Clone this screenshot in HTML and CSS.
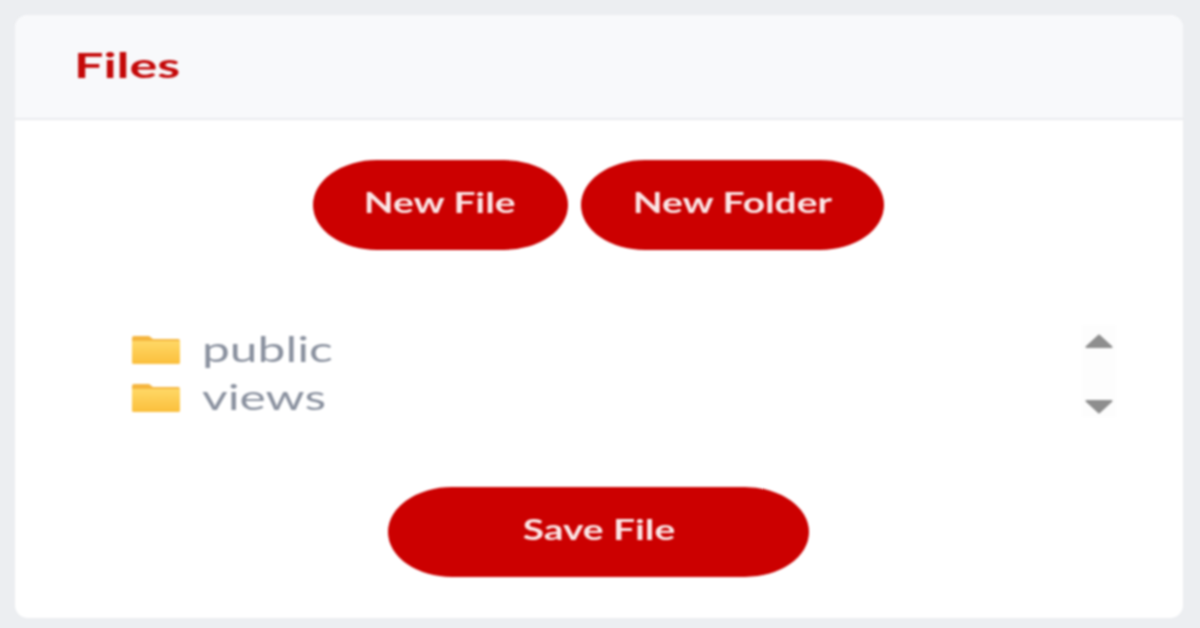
FILE: index.html
```html
<!DOCTYPE html>
<html lang="en">

<head>
    <meta charset="UTF-8">
    <meta name="viewport" content="width=device-width, initial-scale=1.0">
    <title>Files</title>
    <link rel="stylesheet" href="styles.css">
</head>

<body>
    <svg class="defs" width="0" height="0">
        <defs>
            <linearGradient id="folder-back" x1="0" y1="0" x2="0" y2="1">
                <stop offset="0" stop-color="#f5b53e" />
                <stop offset="1" stop-color="#f6bb40" />
            </linearGradient>
            <linearGradient id="folder-front" x1="0" y1="0" x2="0" y2="1">
                <stop offset="0" stop-color="#ffd866" />
                <stop offset="1" stop-color="#fbbf3c" />
            </linearGradient>
        </defs>
    </svg>

    <section class="card">
        <header class="card-header">
            <h1>Files</h1>
        </header>

        <div class="card-body">
            <div class="actions">
                <button class="btn btn-file"><span>New File</span></button>
                <button class="btn btn-folder"><span>New Folder</span></button>
            </div>

            <!-- File tree with its scrollbar -->
            <div class="tree">
                <ul class="tree-list">
                    <li>
                        <svg class="folder" viewBox="0 0 48 28">
                            <path d="M0 2 Q0 0 2 0 H17 L21 3 H46 Q48 3 48 5 V26 Q48 28 46 28 H2 Q0 28 0 26 Z" fill="url(#folder-back)" />
                            <path d="M0 5 H48 V26 Q48 28 46 28 H2 Q0 28 0 26 Z" fill="url(#folder-front)" />
                        </svg>
                        <span class="name">public</span>
                    </li>
                    <li>
                        <svg class="folder" viewBox="0 0 48 28">
                            <path d="M0 2 Q0 0 2 0 H17 L21 3 H46 Q48 3 48 5 V26 Q48 28 46 28 H2 Q0 28 0 26 Z" fill="url(#folder-back)" />
                            <path d="M0 5 H48 V26 Q48 28 46 28 H2 Q0 28 0 26 Z" fill="url(#folder-front)" />
                        </svg>
                        <span class="name">views</span>
                    </li>
                </ul>
                <div class="scrollbar">
                    <svg class="arrow" viewBox="0 0 28 14"><path d="M14 1.5 L26.5 13 H1.5 Z" fill="#8e8e8e" stroke="#8e8e8e" stroke-width="2" stroke-linejoin="round" /></svg>
                    <svg class="arrow" viewBox="0 0 28 14"><path d="M1.5 1 H26.5 L14 12.5 Z" fill="#8e8e8e" stroke="#8e8e8e" stroke-width="2" stroke-linejoin="round" /></svg>
                </div>
            </div>

            <div class="save-row">
                <button class="btn btn-save"><span>Save File</span></button>
            </div>
        </div>
    </section>
</body>

</html>
```

FILE: styles.css
```css
* {
    box-sizing: border-box;
}

body {
    margin: 0;
    height: 628px;
    padding: 15px 17px 10px 15px;
    background-color: #eceef1;
    font-family: Lato, "Open Sans", sans-serif;
    overflow: hidden;
}

.defs {
    display: block;
}

/* The reference is an upscaled, slightly soft picture */
.card {
    height: 603px;
    background-color: #fff;
    border-radius: 13px;
    overflow: hidden;
    filter: blur(0.8px);
}

.card-header {
    height: 105px;
    padding: 0 59px 4px;
    display: flex;
    align-items: center;
    background-color: #f8f9fb;
    border-bottom: 2px solid #e9ebee;
}

.card-header h1 {
    margin: 0;
    font-size: 34px;
    font-weight: 700;
    color: #c40808;
    transform: scaleX(1.53);
    transform-origin: left center;
}

.card-body {
    padding-top: 40px;
}

.actions {
    display: flex;
    justify-content: center;
    gap: 13px;
    margin-left: -2px;
}

.btn {
    height: 90px;
    padding: 0 0 7px;
    border: none;
    border-radius: 64px / 45px;
    background-color: #cc0000;
    color: #fbe6e6;
    font-family: inherit;
    font-size: 29px;
    font-weight: 700;
    cursor: pointer;
}

.btn span {
    display: inline-block;
    transform: scaleX(1.34);
}

.btn-file {
    width: 255px;
}

.btn-folder {
    width: 303px;
}

.tree {
    display: flex;
    justify-content: space-between;
    height: 100px;
    margin: 75px 67px 0 117px;
}

.tree-list {
    list-style-type: none;
    margin: 0;
    padding: 1px 0 0;
}

.tree-list li {
    display: flex;
    align-items: center;
    gap: 22px;
    height: 48px;
    font-size: 35px;
    color: #8a919f;
}

.name {
    transform: scaleX(1.42);
    transform-origin: left center;
    margin-top: -5px;
}

.folder {
    width: 48px;
    height: 28px;
}

.scrollbar {
    display: flex;
    flex-direction: column;
    justify-content: space-between;
    align-items: center;
    width: 34px;
    height: 92px;
    padding: 9px 0 3px;
    background-color: #fdfdfd;
}

.arrow {
    width: 28px;
    height: 14px;
}

.save-row {
    display: flex;
    justify-content: center;
    margin-top: 62px;
    margin-left: -1px;
}

.btn-save {
    width: 421px;
}
```
